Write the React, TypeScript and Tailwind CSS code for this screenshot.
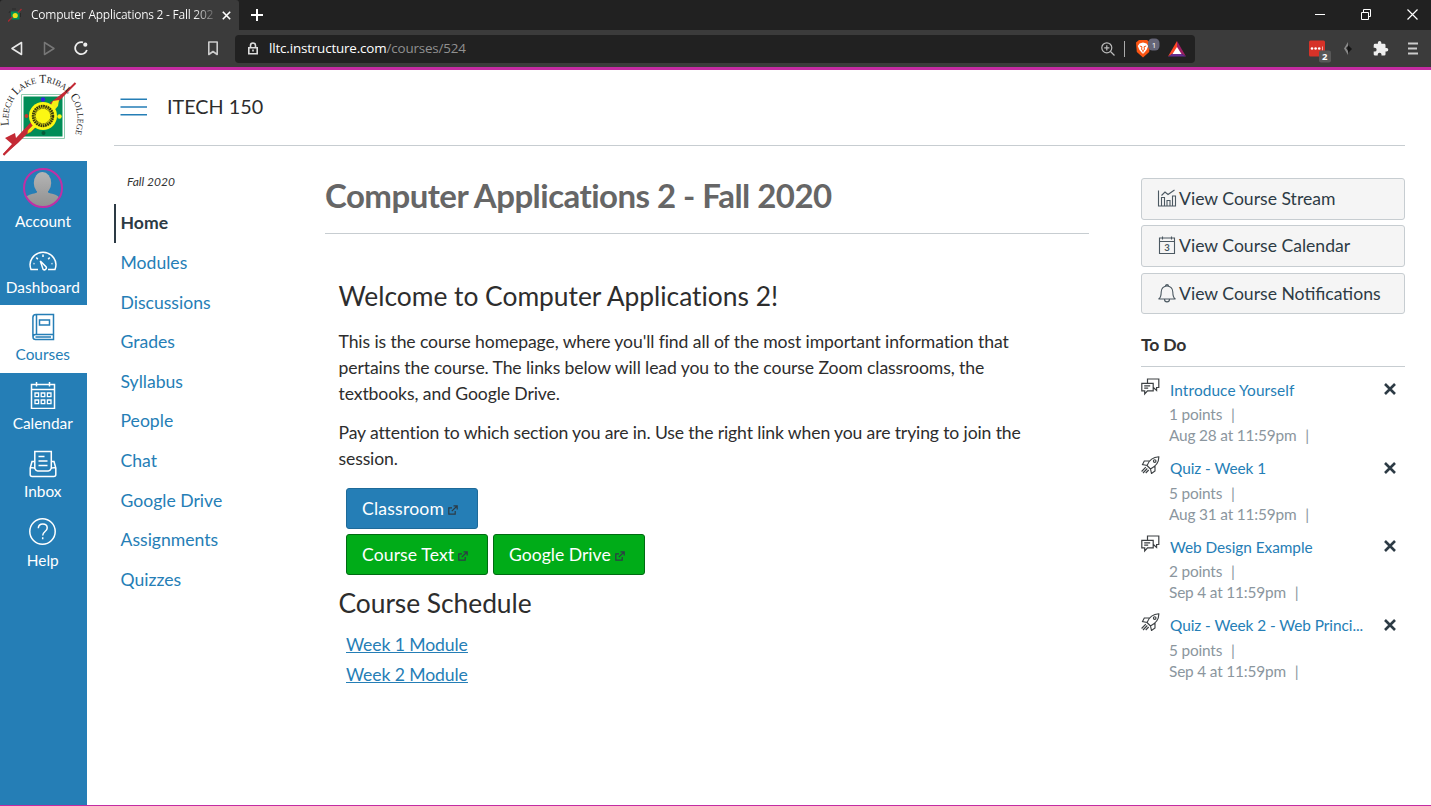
import React from "react";

const nav = ["Modules", "Discussions", "Grades", "Syllabus", "People", "Chat", "Google Drive", "Assignments", "Quizzes"];

const todos = [
  { kind: "talk", title: "Introduce Yourself", points: "1 points", due: "Aug 28 at 11:59pm" },
  { kind: "quiz", title: "Quiz - Week 1", points: "5 points", due: "Aug 31 at 11:59pm" },
  { kind: "talk", title: "Web Design Example", points: "2 points", due: "Sep 4 at 11:59pm" },
  { kind: "quiz", title: "Quiz - Week 2 - Web Princi...", points: "5 points", due: "Sep 4 at 11:59pm" },
];

function Tools() {
  return (
    <>
      <header className="flex h-[30px] shrink-0 items-stretch bg-[#212121] text-white">
        <div className="flex w-[239px] items-center rounded-t-[3px] bg-[#3b3b3b] pl-[8px]">
          <svg className="mr-[9px] shrink-0" width="14" height="14" viewBox="0 0 14 14">
            <path d="M3 3.500h8.500v8H3z" fill="#008d57" />
            <circle cx="7.200" cy="7.500" r="2.600" fill="#e8e01c" />
            <path d="M0 13.500 4.500 9M10 4.500l3.500-3.500" stroke="#a92a30" strokeWidth="1.400" />
            <path d="M1 5l1-2M4 1h4M12.500 5v4" stroke="#2a2a2a" strokeWidth="1" fill="none" />
          </svg>
          <span className="w-[185px] overflow-hidden whitespace-nowrap bg-gradient-to-r from-white from-88% to-[#555] bg-clip-text font-['Open_Sans','Noto_Sans',sans-serif] text-[12px] leading-[18px] tracking-[-0.250px] text-transparent">
            Computer Applications 2 - Fall 202
          </span>
          <svg className="ml-[6px]" width="9" height="9" viewBox="0 0 9 9" stroke="#fff" strokeWidth="1.6">
            <path d="m.8.8 7.4 7.4M8.2.8.8 8.2" />
          </svg>
        </div>
        <svg className="ml-[12px] mt-[9px]" width="12" height="12" viewBox="0 0 12 12" stroke="#fff" strokeWidth="2">
          <path d="M6 0v12M0 6h12" />
        </svg>
        <div className="ml-auto flex items-start pr-[12px] pt-[9px]">
          <svg width="104" height="11" viewBox="0 0 104 11" fill="none" stroke="#fff">
            <path d="M0 5.500h10M46.500 3.500h7v7h-7zM48.500 3.500v-3h7v7h-2" />
            <path d="m92.500.5 10 10m0-10-10 10" strokeWidth="1.200" />
          </svg>
        </div>
      </header>
      <div className="flex h-[37px] shrink-0 items-center bg-[#3b3b3b]">
        <svg className="ml-[10px]" width="14" height="15" viewBox="0 0 14 15" fill="none" stroke="#e8e8e8" strokeWidth="1.600" strokeLinejoin="round">
          <path d="M11.500 1.500v12L2 7.500z" />
        </svg>
        <svg className="ml-[19px]" width="14" height="15" viewBox="0 0 14 15" fill="none" stroke="#777" strokeWidth="1.500" strokeLinejoin="round">
          <path d="M1.500 1.500v12l9.500-6z" />
        </svg>
        <svg className="ml-[17px]" width="15" height="15" viewBox="0 0 15 15" fill="none" stroke="#eee" strokeWidth="1.800">
          <path d="M9 1.400A6 6 0 1 0 12.900 9" />
          <circle cx="11.300" cy="3.700" r="2.100" fill="#eee" stroke="none" />
        </svg>
        <svg className="ml-[118px]" width="12" height="15" viewBox="0 0 12 15" fill="none" stroke="#ccc" strokeWidth="1.600">
          <path d="M1.800 1h8.400v12.500L6 10.500l-4.200 3z" strokeLinejoin="round" />
        </svg>
        <div className="ml-[16px] flex h-[28px] w-[960px] items-center rounded-[4px] bg-[#212121] pl-[13px]">
          <svg width="10" height="13" viewBox="0 0 10 13" fill="none" stroke="#ddd">
            <path d="M2.500 5V3.500a2.500 2.500 0 0 1 5 0V5" strokeWidth="1.600" />
            <path d="M.8 5.800h8.400v6H.8z" strokeWidth="1.600" />
            <path d="M5 7.500v2" strokeWidth="1.600" />
          </svg>
          <span className="ml-[11px] whitespace-nowrap pb-px font-['Open_Sans','Noto_Sans',sans-serif] text-[13.400px] leading-[20px] tracking-[-0.16px] text-white">
            lltc.instructure.com<span className="text-[#909090]">/courses/524</span>
          </span>
          <div className="ml-auto flex items-center pr-[9px]">
            <svg width="14" height="14" viewBox="0 0 14 14" fill="none" stroke="#bbb" strokeWidth="1.200">
              <circle cx="5.800" cy="5.800" r="5" />
              <path d="m9.500 9.500 4 4M5.800 3.200v5.200M3.200 5.800h5.200" />
            </svg>
            <span className="ml-[9px] h-[16px] w-px bg-[#aaa]" />
            <svg className="ml-[10px]" width="26" height="21" viewBox="0 0 26 21">
              <path d="M4 2h8l3 2.500-.8 9.500L8 19.500 1.800 14 1 4.500z" fill="#fb5412" />
              <path d="M4.500 5.500 8 4.500l3.500 1L13.200 8l-1.700 4L9 15l-1 .8L7 15l-2.500-3-1.700-4z" fill="#fff" />
              <path d="M4.800 8 7 8.800 6.500 11.500 8 12.500l1.500-1L9 8.800l2.200-.8M8 12.500v1.800" fill="none" stroke="#fb5412" />
              <rect x="13" y="0.500" width="11.500" height="12" rx="4.500" fill="#656577" />
              <text x="16.800" y="9.500" fontSize="8" fill="#fff" fontFamily="Open Sans">1</text>
            </svg>
            <svg className="ml-[7px]" width="18" height="16" viewBox="0 0 18 16">
              <path d="M9 0 0 15.500 9 10z" fill="#ff4724" />
              <path d="m9 0 9 15.500L9 10z" fill="#9e1f63" />
              <path d="M0 15.500h18L9 10z" fill="#662d91" />
              <path d="m9 6-4.500 7h9z" fill="#fff" />
            </svg>
          </div>
        </div>
        <svg className="ml-[114px] mt-[4px]" width="23" height="24" viewBox="0 0 23 24">
          <rect x="0" y="1.500" width="16" height="16" rx="1.500" fill="#d63228" />
          <g fill="#fff">
            <circle cx="3" cy="9.500" r="1.300" />
            <circle cx="6.600" cy="9.500" r="1.300" />
            <circle cx="10.200" cy="9.500" r="1.300" />
            <path d="M13 7.500h1v4h-1z" opacity=".6" />
          </g>
          <rect x="10" y="11.500" width="12" height="12" rx="2" fill="#585858" />
          <text x="13" y="21.200" fontSize="9.500" fontWeight="700" fill="#fff" fontFamily="Open Sans">2</text>
        </svg>
        <svg className="ml-[11px]" width="10" height="14" viewBox="0 0 10 14">
          <path d="M5 0 1 6.500 5 13z" fill="#888" />
          <path d="m5 3 4 4-4 4z" fill="#151515" />
          <path d="m3 6 2-2v5z" fill="#222" />
        </svg>
        <svg className="ml-[20px]" width="16" height="16" viewBox="1 1 23 23" fill="#eee">
          <path d="M20.500 11H19V7a2 2 0 0 0-2-2h-4V3.500a2.500 2.500 0 0 0-5 0V5H4a2 2 0 0 0-2 2v3.800h1.500a2.700 2.700 0 0 1 0 5.400H2V20a2 2 0 0 0 2 2h3.800v-1.500a2.700 2.700 0 0 1 5.400 0V22H17a2 2 0 0 0 2-2v-4h1.500a2.500 2.500 0 0 0 0-5z" />
        </svg>
        <svg className="ml-[19px]" width="10" height="13" viewBox="0 0 10 13" stroke="#ccc" strokeWidth="1.800">
          <path d="M0 1.500h10M0 6.500h9M0 11.500h10" />
        </svg>
      </div>
      <div className="h-[3px] shrink-0 bg-[#c42ba2]" />
    </>
  );
}

function Logo() {
  return (
    <svg className="block shrink-0 bg-white" width="87" height="91" viewBox="0 0 87 91">
      <defs>
        <path id="arc" d="M9 55.500A34.500 36.500 0 1 1 76.700 57L75 66" />
      </defs>
      <path d="M21.500 24.500h43v44h-43z" fill="#fff" stroke="#8fcdb0" />
      <path d="M23.500 26.500h39v40h-39z" fill="#008d57" />
      <path d="M75.500 13 3.500 85" stroke="#c42a35" strokeWidth="2" />
      <path d="m73 15-19 22-4-4z" fill="#c42a35" />
      <path d="m31 52 4 4-17 17-14 12-1-1 9-10-7-6 10-5 1 5z" fill="#c42a35" />
      <path d="m34 54-6 6-1 4 4-2 6-6z" fill="#f4ef16" stroke="#c42a35" strokeWidth=".5" />
      <path d="m49 39 4-8 6-1-1 6-6 7z" fill="#f4ef16" />
      <circle cx="43" cy="46" r="14" fill="#fbf713" />
      <circle cx="43" cy="46" r="9.800" fill="none" stroke="#37370c" strokeWidth="2.800" strokeDasharray="1.700 .6" />
      <circle cx="43" cy="46" r="7.800" fill="#fbf713" stroke="#5c5910" strokeWidth="1.200" strokeDasharray="1 .6" />
      <circle cx="43" cy="29.500" r="2.200" fill="#3224e0" />
      <circle cx="26.500" cy="46" r="2" fill="#c8362d" />
      <circle cx="59.500" cy="46.500" r="2.200" fill="#fbf713" />
      <circle cx="43.500" cy="63" r="2" fill="#055b38" />
      <text fontFamily="Liberation Serif, serif" fill="#222" fontSize="12" textLength="133" lengthAdjust="spacingAndGlyphs">
        <textPath href="#arc">
          L<tspan fontSize="8.800">EECH</tspan> L<tspan fontSize="8.800">AKE</tspan> T<tspan fontSize="8.800">RIBAL</tspan> C<tspan fontSize="8.800">OLLEGE</tspan>
        </textPath>
      </text>
    </svg>
  );
}

function SideIcon({ name }: { name: string }) {
  const common = { width: 28, height: 28, viewBox: "0 0 28 28", fill: "none", stroke: "currentColor", strokeWidth: 1.5 };
  if (name === "Dashboard")
    return (
      <svg {...common}>
        <path d="M9 22.500H2C.5 18.500.7 14.500 3.200 11 5.700 7.500 10 5.200 14 5.200s8.300 2.300 10.800 5.800c2.500 3.500 2.700 7.500 1.200 11.500h-7M11.300 14l5.700 5.700c1.200 1.900-1.100 4.100-2.900 2.700z" />
        <path d="M14 7.500v2.500M7.300 10.500l1.500 1.800M20.700 10.500l-1.500 1.800M4.500 16.500l1 .2M23.500 16.500l-1 .2" />
      </svg>
    );
  if (name === "Courses")
    return (
      <svg {...common}>
        <path d="M7 1.500h17.500v20H6.500a2.500 2.500 0 0 0 0 5h18v-5M3.900 23.500V4.500a3 3 0 0 1 3-3M7.500 1.500v20M6.500 24H22M10.500 7h10v5h-10z" />
      </svg>
    );
  if (name === "Calendar")
    return (
      <svg {...common}>
        <path d="M2.500 3.500h23v24h-23zM2.500 8.500h23M7.500 1v4.500M20.500 1v4.500" />
        <path strokeWidth="1.300" d="M6 12h3.600v3.600H6zM12.200 12h3.600v3.600h-3.600zM18.400 12H22v3.600h-3.600zM6 19h3.600v3.600H6zM12.200 19h3.600v3.600h-3.600zM18.400 19H22v3.600h-3.600z" />
      </svg>
    );
  if (name === "Inbox")
    return (
      <svg {...common}>
        <path d="M5.800 11.500H3L1.200 18v6.500a2 2 0 0 0 2 2h21.600a2 2 0 0 0 2-2V18L25 11.500h-2.700M1.200 17.500c3 0 4.300 0 4.800 1.300.6 1.600 1.200 2.200 2.700 2.200h10.600c1.500 0 2.100-.6 2.700-2.200.5-1.300 1.800-1.300 4.800-1.300M5.800 18V1.500h16.500V18M9.500 6.500h6M9.500 11h9M9.500 15.500h9" />
      </svg>
    );
  return (
    <svg {...common}>
      <circle cx="13.500" cy="13.500" r="12.700" />
      <path d="M9.300 10.300c.1-2.700 1.900-4.300 4.500-4.300 2.500 0 4.400 1.600 4.400 3.900 0 3.800-4.500 3.400-4.500 7.600M13.700 19.200v2" />
    </svg>
  );
}

function Sidebar() {
  return (
    <aside className="flex w-[87px] shrink-0 flex-col bg-[#257eb6] text-[15.400px] leading-[18px] text-white">
      <Logo />
      <div className="flex h-[76px] flex-col items-center pr-[1px] pt-[7px]">
        <svg width="40" height="40" viewBox="0 0 40 40">
          <defs>
            <linearGradient id="grey" gradientUnits="userSpaceOnUse" x1="0" y1="4" x2="0" y2="37">
              <stop stopColor="#b5b5b5" />
              <stop offset="1" stopColor="#929292" />
            </linearGradient>
            <clipPath id="round">
              <circle cx="20" cy="20" r="19" />
            </clipPath>
          </defs>
          <g clipPath="url(#round)" fill="url(#grey)">
            <ellipse cx="19.500" cy="15" rx="8.700" ry="11" />
            <path d="M14 22h11v2.500c3 1.500 9 1.500 11 5V39H3v-9.500c2-3.500 8-3.500 11-5z" />
          </g>
          <circle cx="20" cy="20" r="19" fill="none" stroke="#c02fa5" strokeWidth="2" />
        </svg>
        <span className="mt-[4px]">Account</span>
      </div>
      {["Dashboard", "Courses", "Calendar", "Inbox", "Help"].map((name) => (
        <div
          key={name}
          className={
            "flex flex-col items-center pr-[1.500px] " +
            (name === "Courses" ? "h-[68px] bg-white pt-[8px] text-[#257eb6]" : name === "Dashboard" ? "h-[68px] pt-[10px]" : "h-[68.500px] pt-[8px]")
          }
        >
          <SideIcon name={name} />
          <span className={name === "Dashboard" ? "mt-[3px] tracking-[0.1px]" : name === "Calendar" || name === "Help" ? "mt-[5px]" : "mt-[4px]"}>{name}</span>
        </div>
      ))}
    </aside>
  );
}

function External() {
  return (
    <svg className="ml-[4px] mt-[2px]" width="10" height="10" viewBox="0 0 10 10" fill="none" stroke="#2d3b45" strokeWidth="1.200">
      <path d="M4 2.800H.8v6.400h6.400V6M5.500.8h3.700v3.700M9 1 3.800 6.200" />
    </svg>
  );
}

function TodoIcon({ kind }: { kind: string }) {
  return kind === "talk" ? (
    <svg className="mt-px" width="19" height="18" viewBox="0 0 19 18" fill="none" stroke="#3c4043" strokeWidth="1.200">
      <path d="M.8 5.300h11.400v7.500H6.500L3.700 16v-3.200H.8zM6.500 5V1h11.300v8.500h-2.200v3l-3-2.700M3.200 7.800h6M3.200 10.200h4" />
    </svg>
  ) : (
    <svg width="19" height="18" viewBox="0 0 19 18" fill="none" stroke="#3c4043" strokeWidth="1.150">
      <path d="M6 9.500c2-5 6-8.500 11.800-8.700C18 6 14.500 10.500 9.500 13zM8.500 5H3.300L1.500 8.500l4.700 1M14 9.500v5.500l-3.500 2.500-1-4.500M4.800 11.200.6 15.500M6.300 12.500 2 17M7.700 14l-3 3" />
      <circle cx="13.700" cy="5" r="1.300" />
    </svg>
  );
}

function CourseAction({ icon, children, className }: { icon: React.ReactNode; children: React.ReactNode; className: string }) {
  return (
    <button className={"flex w-full items-center rounded-[3px] border border-[#c7cdd1] bg-[#f5f5f5] pl-[15px] text-[17.600px] text-[#2d3b45] " + className}>
      <svg className="mr-[2px]" width="20" height="20" viewBox="0 0 20 20" fill="none" stroke="#4c5962" strokeWidth="1.100">
        {icon}
      </svg>
      <span>{children}</span>
    </button>
  );
}

export default function App() {
  return (
    <div className="flex h-[806px] w-[1431px] flex-col overflow-hidden bg-white font-['Lato',sans-serif] text-[#2d3b45]">
      <Tools />
      <div className="flex h-[735px]">
        <Sidebar />
        <div className="ml-[27px] w-[1291px]">
          <div className="flex h-[76px] items-center border-b border-[#c7cdd1] pb-[2px] pl-[6px]">
            <svg width="27" height="18" viewBox="0 0 27 18" stroke="#257eb6" strokeWidth="1.600">
              <path d="M0.500 1.200h26.500M0.500 9h26.500M0.500 16.800h26.500" />
            </svg>
            <span className="ml-[20px] pb-[2px] text-[19.800px] leading-[26px] text-[#2d2d2d]">ITECH 150</span>
          </div>
          <div className="flex">
            <nav className="w-[211px] text-[17.600px]">
              <p className="pl-[13px] pt-[28px] text-[12px] italic leading-[16px] text-[#333]">Fall 2020</p>
              <div className="mt-[14px] flex h-[39px] items-center border-l-2 border-[#2d3b45] pl-[4.500px] font-bold">Home</div>
              <div className="pt-[0.500px] text-[#257eb6]">
                {nav.map((n) => (
                  <a key={n} className="flex h-[39.600px] items-center pl-[6.500px]">{n}</a>
                ))}
              </div>
            </nav>
            <main className="w-[764px]">
              <h1 className="h-[88px] border-b border-[#c7cdd1] pt-[29px] text-[33px] font-bold leading-[40px] tracking-[-0.540px] text-[#666]">
                Computer Applications 2 - Fall 2020
              </h1>
              <div className="pl-[13.500px] text-[17.600px] leading-[26px] text-[#2d2d2d]">
                <h2 className="mt-[45px] text-[26.400px] leading-[34px] tracking-[-0.02px]">Welcome to Computer Applications 2!</h2>
                <p className="mt-[16px] tracking-[-0.1px]">
                  This is the course homepage, where you'll find all of the most important information that
                  <br />
                  pertains the course. The links below will lead you to the course Zoom classrooms, the
                  <br />
                  textbooks, and Google Drive.
                </p>
                <p className="mt-[13px] tracking-[-0.13px]">
                  Pay attention to which section you are in. Use the right link when you are trying to join the
                  <br />
                  session.
                </p>
                <div className="mt-[16px] flex flex-col items-start gap-[5px] pl-[7.500px] text-white">
                  <a className="flex h-[41px] w-[132px] items-center rounded-[3px] border border-[#1e6a99] bg-[#257eb6] pl-[15px] tracking-[0.2px]">
                    Classroom <External />
                  </a>
                  <div className="flex gap-[5px]">
                    <a className="flex h-[41px] w-[142px] items-center rounded-[3px] border border-[#006b12] bg-[#00ac18] pl-[15px] tracking-[0.1px]">
                      Course Text <External />
                    </a>
                    <a className="flex h-[41px] w-[152px] items-center rounded-[3px] border border-[#006b12] bg-[#00ac18] pl-[15px]">
                      Google Drive <External />
                    </a>
                  </div>
                </div>
                <h2 className="mt-[11px] text-[26.400px] leading-[34px] tracking-[-0.05px]">Course Schedule</h2>
                <div className="mt-[10px] flex flex-col items-start pl-[7.500px] leading-[30px] tracking-[-0.1px] text-[#257eb6] underline">
                  <a>Week 1 Module</a>
                  <a>Week 2 Module</a>
                </div>
              </div>
            </main>
            <section className="ml-[52px] w-[264px] pt-[32px]">
              <CourseAction className="h-[42px]" icon={<path d="M1.500 1.500V17h17V7h-3v10M4.500 17V8.500h3V17M10 17v-5.500h3V17M4.500 6.500l3.500-3.500 3 2.500 6.500-4.500" />}>
                View Course Stream
              </CourseAction>
              <CourseAction
                className="mt-[5px] h-[42px]"
                icon={
                  <>
                    <path d="M2.500 2h15v15.500h-15zM2.500 5.500h15M5.500.5v3M14.500.5v3" />
                    <text x="7.200" y="15" fontFamily="Lato" fontSize="9.500" fontWeight="700" fill="#4c5962" stroke="none">3</text>
                  </>
                }
              >
                View Course Calendar
              </CourseAction>
              <CourseAction className="mt-[6px] h-[41px] pt-px" icon={<path d="M1.500 15h17c-2-1-2.700-2.500-2.700-7C15.800 4.500 13.300 2 10 2S4.200 4.500 4.200 8c0 4.500-.7 6-2.700 7zM7.500 15.200c0 3.500 5 3.500 5 0M8.500 2c0-1.800 3-1.800 3 0" />}>
                View Course Notifications
              </CourseAction>
              <h3 className="mt-[18px] h-[35px] border-b border-[#c7cdd1] text-[17.600px] font-bold leading-[26px] tracking-[-0.2px] text-[#333]">To Do</h3>
              <ul className="pt-[10px]">
                {todos.map((t) => (
                  <li key={t.title} className="flex h-[78.500px]">
                    <TodoIcon kind={t.kind} />
                    <div className="w-[214px] pl-[9px] text-[15.400px] leading-[21px] tracking-[-0.170px] text-[#8b969e]">
                      <a
                        className={
                          "ml-px block whitespace-nowrap text-[#257eb6] " +
                          (t.kind === "quiz" ? "mb-[4px] mt-[2px] " : "mb-[3px] mt-[3px] ") +
                          (t.title === "Introduce Yourself" ? "tracking-[0.1px]" : "tracking-[-0.06px]")
                        }
                      >
                        {t.title}
                      </a>
                      <p>{t.points} <span className="ml-[5px]">|</span></p>
                      <p>{t.due} <span className="ml-[5px]">|</span></p>
                    </div>
                    <svg className="ml-[10px] mt-[6px]" width="12" height="12" viewBox="0 0 12 12" stroke="#2d3b45" strokeWidth="2.600">
                      <path d="m1 1 10 10M11 1 1 11" />
                    </svg>
                  </li>
                ))}
              </ul>
            </section>
          </div>
        </div>
      </div>
      <div className="h-px shrink-0 bg-[#c42ba2]" />
    </div>
  );
}
